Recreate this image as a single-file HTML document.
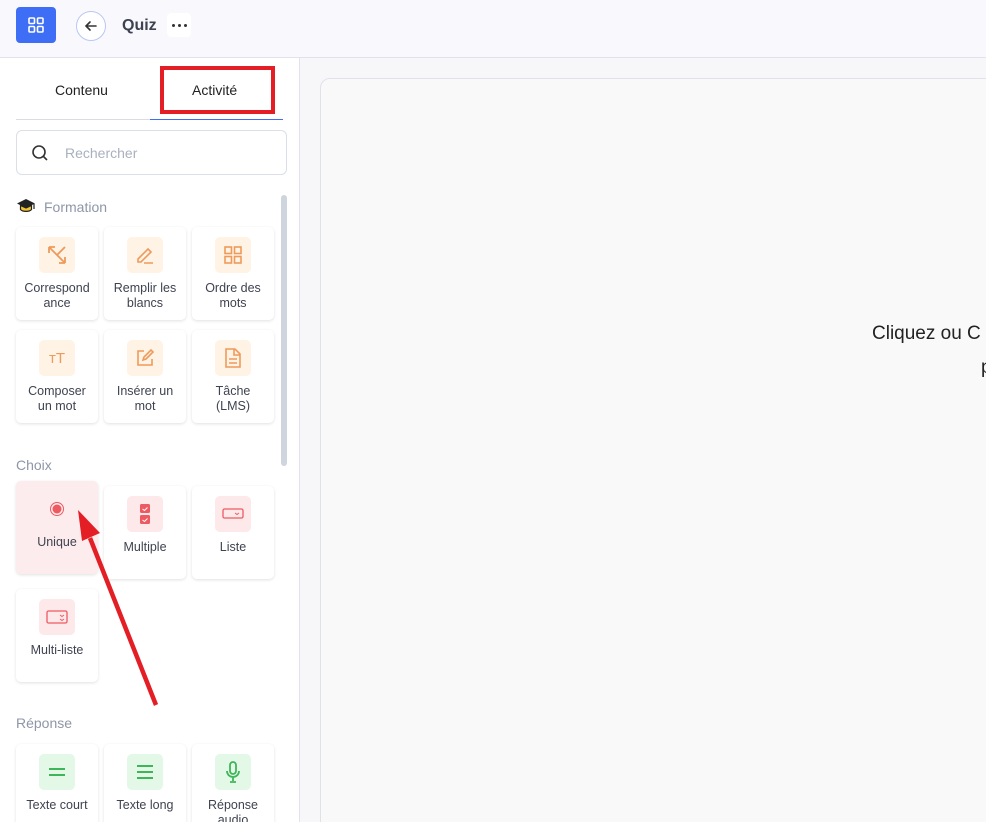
<!DOCTYPE html>
<html style="width:986px;height:822px;overflow:hidden"><head><meta charset="utf-8"><style>
*{box-sizing:border-box;margin:0;padding:0}
body{width:986px;height:822px;overflow:hidden;font-family:"Liberation Sans",sans-serif;background:#f7f7fa;position:relative}
.hdr{position:absolute;left:0;top:0;width:986px;height:58px;background:#f8f8fd;border-bottom:1px solid #e2e2ee}
.side{position:absolute;left:0;top:58px;width:300px;height:764px;background:#fff;border-right:1px solid #e2e2ee;overflow:hidden}
.card{position:absolute;width:82px;height:93px;background:#fff;border-radius:5px;box-shadow:0 1px 3px rgba(0,0,0,.12);text-align:center;font-size:12.5px;color:#3f4350;line-height:15px}
.ic{width:36px;height:36px;border-radius:5px;margin:10px auto 8px;display:flex;align-items:center;justify-content:center}
.o{background:#fff3e6}.r{background:#fde8ea}.g{background:#e3f8e6}
.lbl{position:absolute;left:16px;font-size:14px;color:#8e96a8}
</style></head><body>
<div class="hdr">
 <div style="position:absolute;left:16px;top:7px;width:40px;height:36px;background:#3d6ef5;border-radius:4px;display:flex;align-items:center;justify-content:center">
  <svg width="18" height="18" viewBox="0 0 18 18" fill="none" stroke="#fff" stroke-width="1.6"><rect x="2" y="2" width="5.5" height="5.5" rx="1"/><rect x="10.5" y="2" width="5.5" height="5.5" rx="1"/><rect x="2" y="10.5" width="5.5" height="5.5" rx="1"/><rect x="10.5" y="10.5" width="5.5" height="5.5" rx="1"/></svg></div>
 <div style="position:absolute;left:76px;top:11px;width:30px;height:30px;border-radius:50%;border:1px solid #b9c8f3;background:#fff;display:flex;align-items:center;justify-content:center">
  <svg width="14" height="14" viewBox="0 0 14 14" fill="none" stroke="#333" stroke-width="1.6" stroke-linecap="round"><path d="M12 7H2M6 3L2 7l4 4"/></svg></div>
 <div style="position:absolute;left:122px;top:17px;font-size:16px;font-weight:bold;color:#3d4150">Quiz</div>
 <div style="position:absolute;left:167px;top:13px;width:24px;height:24px;background:#fff;border-radius:4px;display:flex;align-items:center;justify-content:center;gap:3px">
  <i style="width:3px;height:3px;border-radius:50%;background:#333"></i><i style="width:3px;height:3px;border-radius:50%;background:#333"></i><i style="width:3px;height:3px;border-radius:50%;background:#333"></i></div>
</div>
<div class="side">
 <div style="position:absolute;left:55px;top:24px;font-size:14px;color:#222">Contenu</div>
 <div style="position:absolute;left:192px;top:24px;font-size:14px;color:#222">Activité</div>
 <div style="position:absolute;left:16px;top:61px;width:134px;height:1px;background:#d9dce4"></div>
 <div style="position:absolute;left:150px;top:61px;width:133px;height:1px;background:#3d6ef5"></div>
 <div style="position:absolute;left:160px;top:8px;width:115px;height:48px;border:4px solid #e31e24"></div>
 <div style="position:absolute;left:16px;top:72px;width:271px;height:45px;border:1px solid #dcdfe7;border-radius:6px">
  <svg style="position:absolute;left:14px;top:13px" width="18" height="18" viewBox="0 0 18 18" fill="none" stroke="#333" stroke-width="1.6"><circle cx="8" cy="8" r="6"/><path d="M12.5 12.5L16 16"/></svg>
  <div style="position:absolute;left:48px;top:14px;font-size:14px;color:#a9b0be">Rechercher</div></div>
 <div style="position:absolute;left:281px;top:137px;width:6px;height:271px;background:#cfd5de;border-radius:3px"></div>
 <svg style="position:absolute;left:16px;top:140px" width="20" height="16" viewBox="0 0 20 16"><path d="M10 1L1 5.5 10 10l9-4.5z" fill="#222"/><path d="M4.5 7.5v4c2 2.5 9 2.5 11 0v-4L10 10z" fill="#f2c230" stroke="#222" stroke-width="1.2"/><path d="M18 6v5" stroke="#222" stroke-width="1.2"/></svg>
 <div class="lbl" style="left:44px;top:141px">Formation</div>
 <div class="lbl" style="top:399px">Choix</div>
 <div class="lbl" style="top:657px">Réponse</div>
</div>
<div class="card" style="left:16px;top:227px"><div class="ic o"><svg width="22" height="22" viewBox="0 0 22 22" fill="none" stroke="#ee9a5a" stroke-width="1.8"><path d="M3 3l16 16M3 3v6M3 3h6M19 3L11 11M19 19v-6M19 19h-6"/></svg></div>Correspond<br>ance</div>
<div class="card" style="left:104px;top:227px"><div class="ic o"><svg width="22" height="22" viewBox="0 0 22 22" fill="none" stroke="#ee9a5a" stroke-width="1.6"><path d="M4 15l10-10 3 3-10 10H4z M10 19h9"/></svg></div>Remplir les<br>blancs</div>
<div class="card" style="left:192px;top:227px"><div class="ic o"><svg width="20" height="20" viewBox="0 0 20 20" fill="none" stroke="#ee9a5a" stroke-width="1.6"><rect x="2" y="2" width="6.5" height="6.5"/><rect x="11.5" y="2" width="6.5" height="6.5"/><rect x="2" y="11.5" width="6.5" height="6.5"/><rect x="11.5" y="11.5" width="6.5" height="6.5"/></svg></div>Ordre des<br>mots</div>
<div class="card" style="left:16px;top:330px"><div class="ic o" style="color:#ee9a5a;font-size:15px">ᴛT</div>Composer<br>un mot</div>
<div class="card" style="left:104px;top:330px"><div class="ic o"><svg width="20" height="20" viewBox="0 0 20 20" fill="none" stroke="#ee9a5a" stroke-width="1.6"><path d="M9 3H3v14h14v-6M8 12l1-3 7-7 2 2-7 7z"/></svg></div>Insérer un<br>mot</div>
<div class="card" style="left:192px;top:330px"><div class="ic o"><svg width="18" height="20" viewBox="0 0 18 20" fill="none" stroke="#ee9a5a" stroke-width="1.6"><path d="M2 1h9l5 5v13H2zM10 1v6h6M5 11h8M5 15h8"/></svg></div>Tâche<br>(LMS)</div>
<div class="card" style="left:16px;top:481px;background:#fdeced"><div class="ic"><svg width="16" height="16"><circle cx="8" cy="8" r="6.5" fill="none" stroke="#ee5a62" stroke-width="1"/><circle cx="8" cy="8" r="4.5" fill="#ee5a62"/></svg></div>Unique</div>
<div class="card" style="left:104px;top:486px"><div class="ic r"><svg width="12" height="24"><rect x="1" y="2" width="10" height="9" rx="1.5" fill="#ee5a62"/><rect x="1" y="13" width="10" height="9" rx="1.5" fill="#ee5a62"/><path d="M3.5 7l2 1.5 3-3M3.5 18l2 1.5 3-3" stroke="#fff" fill="none"/></svg></div>Multiple</div>
<div class="card" style="left:192px;top:486px"><div class="ic r"><svg width="22" height="14"><rect x="1" y="2" width="20" height="9" rx="1.5" fill="none" stroke="#ee5a62" stroke-width="1.3"/><path d="M13 6l2 1.5 2-1.5" stroke="#ee5a62" fill="none"/></svg></div>Liste</div>
<div class="card" style="left:16px;top:589px"><div class="ic r"><svg width="22" height="16"><rect x="1" y="2" width="20" height="12" rx="1.5" fill="none" stroke="#ee5a62" stroke-width="1.3"/><path d="M14 6l2 1.5 2-1.5M14 10l2 1.5 2-1.5" stroke="#ee5a62" fill="none"/></svg></div>Multi-liste</div>
<div class="card" style="left:16px;top:744px"><div class="ic g"><svg width="18" height="12" stroke="#3fb55a" stroke-width="2"><path d="M1 3h16M1 9h16"/></svg></div>Texte court</div>
<div class="card" style="left:104px;top:744px"><div class="ic g"><svg width="18" height="16" stroke="#3fb55a" stroke-width="2"><path d="M1 2h16M1 8h16M1 14h16"/></svg></div>Texte long</div>
<div class="card" style="left:192px;top:744px"><div class="ic g"><svg width="16" height="22" fill="none" stroke="#3fb55a" stroke-width="1.8"><rect x="5" y="1" width="6" height="12" rx="3"/><path d="M2 10a6 6 0 0012 0M8 16v4M5 21h6"/></svg></div>Réponse<br>audio</div>
<div style="position:absolute;left:320px;top:78px;width:680px;height:760px;background:#f9f9f9;border:1px solid #e1e1ec;border-radius:10px"></div>
<div style="position:absolute;left:872px;top:323px;font-size:19px;color:#222;white-space:nowrap">Cliquez ou C</div>
<div style="position:absolute;left:981px;top:357px;font-size:19px;color:#222">p</div>
<svg style="position:absolute;left:0;top:0" width="986" height="822"><path d="M156 705L90 538" stroke="#e31e24" stroke-width="4.5"/><path d="M78 510L100 533 82 541z" fill="#e31e24"/></svg>
</body></html>
